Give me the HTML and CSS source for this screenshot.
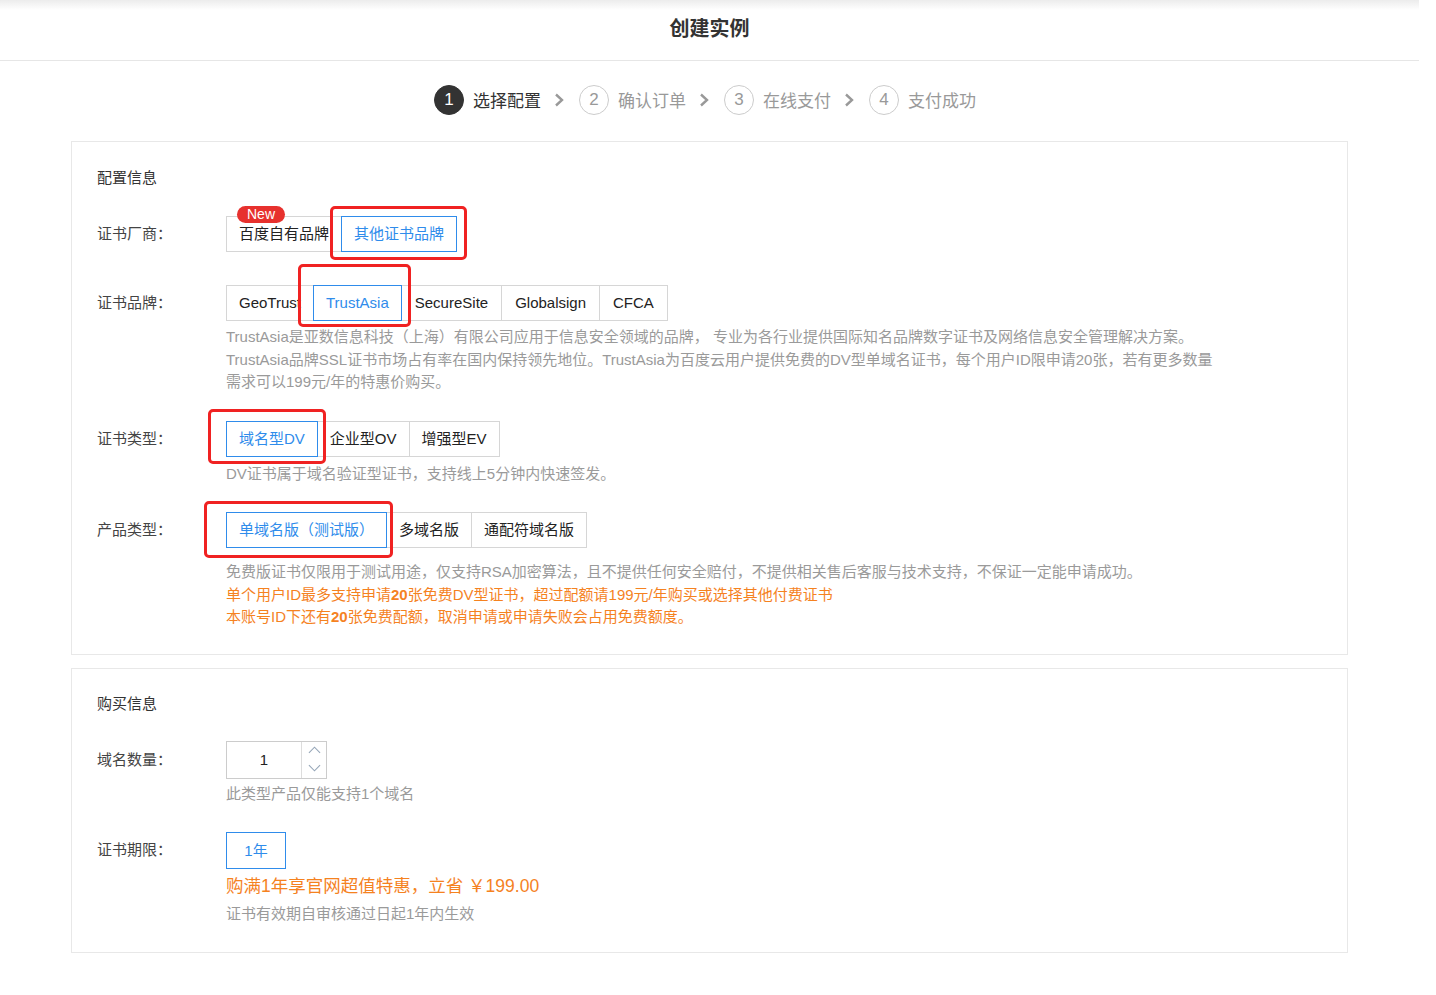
FILE: index.html
```html
<!doctype html>
<html lang="zh-CN">
<head>
    <meta charset="UTF-8">
    <title>创建实例</title>
    <link rel="stylesheet" href="styles.css">
</head>
<body>
<div class="page">
    <div class="topbar">创建实例</div>

    <div class="steps">
        <div class="step active"><span class="num">1</span><span class="txt">选择配置</span></div>
        <svg class="arrow" viewBox="0 0 10 14"><path d="M2 1.5 L8 7 L2 12.5"/></svg>
        <div class="step"><span class="num">2</span><span class="txt">确认订单</span></div>
        <svg class="arrow" viewBox="0 0 10 14"><path d="M2 1.5 L8 7 L2 12.5"/></svg>
        <div class="step"><span class="num">3</span><span class="txt">在线支付</span></div>
        <svg class="arrow" viewBox="0 0 10 14"><path d="M2 1.5 L8 7 L2 12.5"/></svg>
        <div class="step"><span class="num">4</span><span class="txt">支付成功</span></div>
    </div>

    <div class="panel panel-config">
        <div class="panel-title">配置信息</div>

        <div class="row row-vendor">
            <div class="label">证书厂商：</div>
            <div class="field">
                <div class="btns">
                    <span class="btn first">百度自有品牌<i class="badge">New</i></span>
                    <span class="btn on">其他证书品牌<i class="mark mark-vendor"></i></span>
                </div>
            </div>
        </div>

        <div class="row row-brand">
            <div class="label">证书品牌：</div>
            <div class="field">
                <div class="btns">
                    <span class="btn">GeoTrust</span>
                    <span class="btn on">TrustAsia<i class="mark mark-brand"></i></span>
                    <span class="btn latin">SecureSite</span>
                    <span class="btn latin">Globalsign</span>
                    <span class="btn latin">CFCA</span>
                </div>
                <p class="tip tip-brand">TrustAsia是亚数信息科技（上海）有限公司应用于信息安全领域的品牌， 专业为各行业提供国际知名品牌数字证书及网络信息安全管理解决方案。<br>TrustAsia品牌SSL证书市场占有率在国内保持领先地位。TrustAsia为百度云用户提供免费的DV型单域名证书，每个用户ID限申请20张，若有更多数量<br>需求可以199元/年的特惠价购买。</p>
            </div>
        </div>

        <div class="row row-type">
            <div class="label">证书类型：</div>
            <div class="field">
                <div class="btns">
                    <span class="btn on">域名型DV<i class="mark mark-type"></i></span>
                    <span class="btn">企业型OV</span>
                    <span class="btn">增强型EV</span>
                </div>
                <p class="tip tip-type">DV证书属于域名验证型证书，支持线上5分钟内快速签发。</p>
            </div>
        </div>

        <div class="row row-product">
            <div class="label">产品类型：</div>
            <div class="field">
                <div class="btns">
                    <span class="btn on">单域名版（测试版）<i class="mark mark-product"></i></span>
                    <span class="btn">多域名版</span>
                    <span class="btn">通配符域名版</span>
                </div>
                <p class="tip tip-product">免费版证书仅限用于测试用途，仅支持RSA加密算法，且不提供任何安全赔付，不提供相关售后客服与技术支持，不保证一定能申请成功。<br>
                    <span class="warn">单个用户ID最多支持申请<b>20</b>张免费DV型证书，超过配额请199元/年购买或选择其他付费证书</span><br>
                    <span class="warn">本账号ID下还有<b>20</b>张免费配额，取消申请或申请失败会占用免费额度。</span></p>
            </div>
        </div>
    </div>

    <div class="panel panel-buy">
        <div class="panel-title">购买信息</div>

        <div class="row row-count">
            <div class="label">域名数量：</div>
            <div class="field">
                <div class="stepper">
                    <span class="val">1</span>
                    <span class="arrows">
                        <svg viewBox="0 0 14 8"><path d="M1 7 L7 1 L13 7"/></svg>
                        <svg viewBox="0 0 14 8"><path d="M1 1 L7 7 L13 1"/></svg>
                    </span>
                </div>
                <p class="tip tip-count">此类型产品仅能支持1个域名</p>
            </div>
        </div>

        <div class="row row-period">
            <div class="label">证书期限：</div>
            <div class="field">
                <div class="btns">
                    <span class="btn on year">1年</span>
                </div>
                <p class="promo">购满1年享官网超值特惠，立省 ￥199.00</p>
                <p class="tip tip-period">证书有效期自审核通过日起1年内生效</p>
            </div>
        </div>
    </div>
</div>
</body>
</html>
```

FILE: styles.css
```css
*{
    margin: 0;
    padding: 0;
    box-sizing: border-box;
}
body{
    background: #fff;
    font-family: "Liberation Sans", "Noto Sans CJK SC", sans-serif;
    color: #333;
}
.page{
    width: 1419px;
    padding-bottom: 40px;
}
.topbar{
    height: 61px;
    line-height: 59px;
    text-align: center;
    font-size: 20px;
    font-weight: bold;
    color: #333;
    border-bottom: 1px solid #e6e6e6;
    background: linear-gradient(#ececec, #fff 10px);
}

/* steps */
.steps{
    display: flex;
    align-items: center;
    justify-content: center;
    margin-top: 24px;
    height: 30px;
    padding-right: 9px;
}
.step{
    display: flex;
    align-items: center;
}
.step .num{
    width: 30px;height: 30px;border-radius: 50%;
    border: 1px solid #ccc;
    color: #999;
    font-size: 17px;
    line-height: 28px;
    text-align: center;
}
.step .txt{
    margin-left: 9px;
    padding-top: 3px;
    font-size: 17px;
    line-height: 28px;
    color: #999;
}
.step.active .num{
    background: #333;border-color: #333;color: #fff;
}
.step.active .txt{
    color: #333;
}
.arrow{
    width: 10px;height: 14px;
    margin: 0 15px 0 13px;
    fill: none;stroke: #999;stroke-width: 2.4px;
}

/* panels */
.panel{
    width: 1277px;
    margin: 26px 0 0 71px;
    border: 1px solid #e8e8e8;
    padding: 26px 24px 25px 25px;
}
.panel-buy{
    margin-top: 13px;
    padding-top: 25px;
    padding-bottom: 27px;
}
.panel-title{
    font-size: 15px;
    line-height: 20px;
    color: #333;
}
.row{
    display: flex;
    margin-top: 28px;
}
.row-brand{margin-top: 33px;}
.row-type{margin-top: 27px;}
.row-product{margin-top: 27px;}
.row-count{margin-top: 27px;}
.row-period{margin-top: 27px;}
.label{
    width: 129px;
    flex: none;
    font-size: 15px;
    line-height: 36px;
    color: #444;
}
.row-count .label{line-height: 38px;}
.field{
    flex: 1;
}
.btns{
    display: flex;
}
.btn{
    position: relative;
    height: 36px;
    line-height: 34px;
    padding: 0 12px;
    border: 1px solid #d6d6d6;
    margin-left: -1px;
    font-size: 15px;
    color: #222;
    white-space: nowrap;
    background: #fff;
}
.btn.latin{padding: 0 13px;}
.btn:first-child{margin-left: 0;}
.btn.on{
    border-color: #2f8ceb;
    color: #2f8ceb;
    z-index: 1;
}
.btn.year{
    width: 60px;height: 37px;line-height: 35px;
    text-align: center;padding: 0;
}
.badge{
    position: absolute;
    left: 10px;top: -11px;
    height: 17px;line-height: 17px;
    padding: 0 10px;
    border-radius: 9px;
    background: #e7312e;
    color: #fff;
    font-style: normal;
    font-size: 14px;
}
.mark{
    position: absolute;
    border: 3px solid #f02222;
    border-radius: 5px;
}
.mark-vendor{left: -12px;top: -11px;right: -11px;bottom: -9px;}
.mark-brand{left: -16px;top: -22px;right: -10px;bottom: -7px;}
.mark-type{left: -19px;top: -13px;right: -9px;bottom: -8px;}
.mark-product{left: -23px;top: -12px;right: -7px;bottom: -11px;}

.tip{
    font-size: 15px;
    line-height: 22.5px;
    color: #9a9a9a;
    white-space: nowrap;
}
.tip-brand{margin-top: 5px;}
.tip-type{margin-top: 6px;}
.tip-product{margin-top: 13px;}
.tip-count{margin-top: 4px;line-height: 22px;}
.tip-period{margin-top: 5px;line-height: 22px;}
.warn{
    color: #f5821f;
}
.warn b{font-weight: bold;}
.promo{
    margin-top: 5px;
    font-size: 17.5px;
    line-height: 24px;
    color: #f5821f;
}

/* stepper */
.stepper{
    display: flex;
    width: 101px;height: 38px;
    border: 1px solid #ccc;
}
.stepper .val{
    width: 75px;
    border-right: 1px solid #ddd;
    text-align: center;
    line-height: 36px;
    font-size: 15px;
    color: #222;
}
.stepper .arrows{
    flex: 1;
    display: flex;
    flex-direction: column;
    align-items: center;
    justify-content: space-between;
    padding: 4px 0 6px;
}
.stepper svg{
    width: 13px;height: 8px;
    fill: none;stroke: #96a6b8;stroke-width: 1.2px;
}
```
